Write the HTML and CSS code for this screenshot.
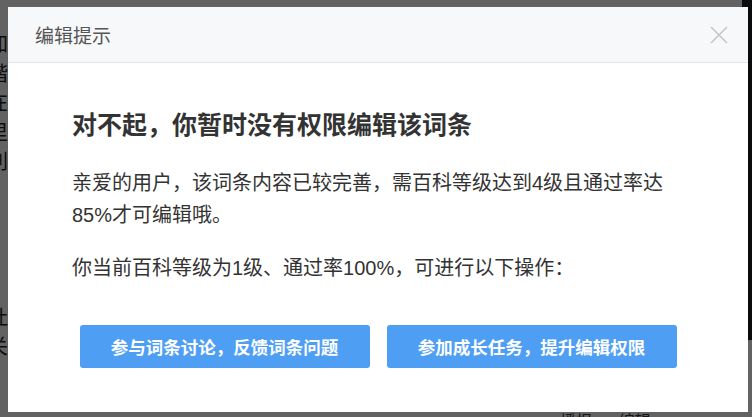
FILE: index.html
```html
<!DOCTYPE html>
<html>
<head>
    <title>编辑提示</title>
  <link rel="stylesheet" href="styles.css">
</head>
<body>
    <div class="page">
        <div class="page-text">
            <p>加</p>
            <p>谐</p>
            <p>在</p>
            <p>里</p>
            <p>利</p>
        </div>
        <div class="page-text lower">
            <p>吐</p>
            <p>关</p>
        </div>
        <div class="page-pic"></div>
        <div class="page-foot">播报 &nbsp;&nbsp;&nbsp;&nbsp; 编辑</div>
    </div>
    <div class="mask"></div>

    <div class="dialog">
        <div class="dialog-head">
            <span class="dialog-title">编辑提示</span>
            <svg class="close" width="18" height="18" viewBox="0 0 18 18">
                <path d="M1 1 L17 17 M17 1 L1 17" stroke="#c6c6c6" stroke-width="1.6" fill="none"/>
            </svg>
        </div>
        <div class="dialog-body">
            <h2>对不起，你暂时没有权限编辑该词条</h2>
            <p class="tip">亲爱的用户，该词条内容已较完善，需百科等级达到4级且通过率达85%才可编辑哦。</p>
            <p class="tip second">你当前百科等级为1级、通过率100%，可进行以下操作：</p>
            <div class="actions">
                <button>参与词条讨论，反馈词条问题</button>
                <button>参加成长任务，提升编辑权限</button>
            </div>
        </div>
    </div>
</body>
</html>
```

FILE: styles.css
```css
body {
    margin: 0;
    width: 752px;
    height: 417px;
    overflow: hidden;
    font-family: "Liberation Sans", "Noto Sans CJK SC", sans-serif;
    background-color: #f4f4f4;
    position: relative;
}

.page {
    height: 417px;
    position: relative;
}

.page-text {
    margin-left: -12px;
    padding-top: 30px;
    font-family: "Liberation Serif", "Noto Sans CJK SC", serif;
    font-size: 20px;
    color: #222;
}

.page-text p {
    margin: 0;
    line-height: 29.5px;
}

.page-text.lower {
    padding-top: 126px;
}

.page-pic {
    position: absolute;
    right: 0;
    top: 0;
    width: 10px;
    height: 340px;
    background-color: #1a1d22;
}

.page-foot {
    position: absolute;
    left: 560px;
    top: 408px;
    font-size: 16px;
    color: #333;
}

.mask {
    position: absolute;
    left: 0;
    top: 0;
    width: 752px;
    height: 417px;
    background-color: rgba(0, 0, 0, 0.6);
}

.dialog {
    position: absolute;
    left: 8px;
    top: 7px;
    width: 740px;
    height: 405px;
    background-color: #fff;
}

.dialog-head {
    height: 55px;
    background-color: #f7f8fa;
    border-bottom: 1px solid #e3e5e8;
    display: flex;
    align-items: center;
    justify-content: space-between;
    padding: 0 20px 0 27px;
}

.dialog-title {
    font-size: 19px;
    color: #555;
}

.close {
    display: block;
}

.dialog-body {
    padding: 45px 64px 0 64px;
}

h2 {
    margin: 0;
    font-size: 25px;
    line-height: 34px;
    font-weight: bold;
    color: #333;
}

.tip {
    margin: 25px 0 0 0;
    font-size: 20px;
    line-height: 32px;
    color: #333;
}

.tip.second {
    margin-top: 21px;
}

.actions {
    display: flex;
    justify-content: center;
    gap: 17px;
    margin-top: 41px;
}

button {
    width: 290px;
    height: 43px;
    background-color: #4e9ef4;
    color: #fff;
    border: none;
    border-radius: 3px;
    font-family: "Noto Sans CJK SC", sans-serif;
    font-size: 17.5px;
    font-weight: bold;
    cursor: pointer;
}

button:hover {
    background-color: #3b8de6;
}
```
